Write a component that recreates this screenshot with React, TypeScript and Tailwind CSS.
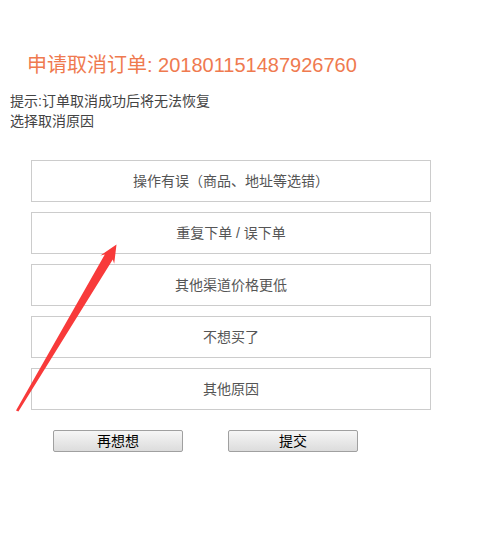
import React from "react";

const reasons = [
  "操作有误（商品、地址等选错）",
  "重复下单 / 误下单",
  "其他渠道价格更低",
  "不想买了",
  "其他原因",
];

export default function App() {
  return (
    <div
      className="relative w-[501px] h-[549px] bg-white overflow-hidden"
      style={{ fontFamily: '"Liberation Sans", "Noto Sans CJK SC", sans-serif' }}
    >
      <h1 className="pt-[51px] pl-[27px] text-[20px] leading-[28px] text-[#ef7a4f] font-normal">
        申请取消订单: 201801151487926760
      </h1>
      <div className="mt-[12px] pl-[10px] text-[14px] leading-[20px] text-[#444]">
        <p>提示:订单取消成功后将无法恢复</p>
        <p>选择取消原因</p>
      </div>
      <div className="mt-[29px] ml-[31px] w-[400px] flex flex-col gap-[10px]">
        {reasons.map((r) => (
          <div
            key={r}
            className="h-[42px] border border-[#cccccc] flex items-center justify-center text-[14px] text-[#555]"
          >
            {r}
          </div>
        ))}
      </div>
      <div className="mt-[20px] ml-[53px] flex gap-[45px]">
        <button className="w-[130px] h-[22px] border border-[#a0a0a0] rounded-[2px] bg-gradient-to-b from-[#f6f6f6] to-[#dcdcdc] text-[14px] leading-[20px] text-black font-normal">
          再想想
        </button>
        <button className="w-[130px] h-[22px] border border-[#a0a0a0] rounded-[2px] bg-gradient-to-b from-[#f6f6f6] to-[#dcdcdc] text-[14px] leading-[20px] text-black font-normal">
          提交
        </button>
      </div>
      <svg
        className="absolute left-0 top-0 pointer-events-none"
        width="501"
        height="549"
        viewBox="0 0 501 549"
      >
        <polygon
          points="16,410.5 104.8,254.6 100.4,255.5 116.5,244.5 114.2,263.7 112.8,259.4 18.4,411.6"
          fill="#f83a3a"
        />
      </svg>
    </div>
  );
}
